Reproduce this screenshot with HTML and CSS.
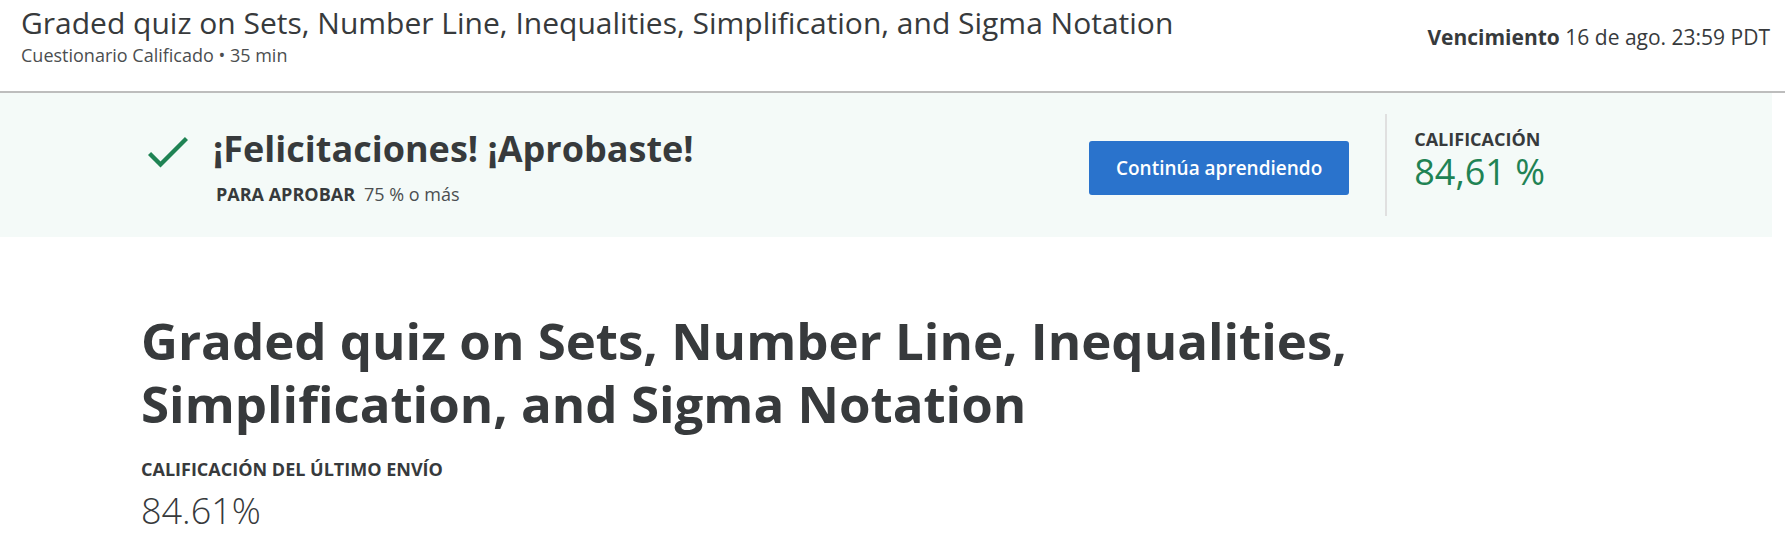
FILE: index.html
```html
<!DOCTYPE html>
<html lang="es">
<head>
<meta charset="utf-8">
<meta name="viewport" content="width=device-width, initial-scale=1">
<title>Graded quiz on Sets, Number Line, Inequalities, Simplification, and Sigma Notation</title>
<link rel="stylesheet" href="styles.css">
</head>
<body>
<header class="quiz-header">
  <div class="quiz-info">
    <h2 class="quiz-name">Graded quiz on Sets, Number Line, Inequalities, Simplification, and Sigma Notation</h2>
    <p class="quiz-kind">Cuestionario Calificado • 35 min</p>
  </div>
  <p class="quiz-due"><strong>Vencimiento</strong> 16 de ago. 23:59 PDT</p>
</header>
<section class="banner">
  <svg class="check" viewBox="0 0 40 32" aria-hidden="true"><path d="M1.5 17.5 12.5 28.5 38.5 2.5" fill="none" stroke="#1f8354" stroke-width="4.4"/></svg>
  <div class="result">
    <h2 class="result-title">¡Felicitaciones! ¡Aprobaste!</h2>
    <p class="result-rule"><strong class="label">PARA APROBAR</strong><span class="rule-value">75 % o más</span></p>
  </div>
  <button class="continue" type="button">Continúa aprendiendo</button>
  <div class="grade">
    <div class="label">CALIFICACIÓN</div>
    <div class="grade-value">84,61 %</div>
  </div>
</section>
<main class="content">
  <h1 class="content-title">Graded quiz on Sets, Number Line, Inequalities, Simplification, and Sigma Notation</h1>
  <div class="label">CALIFICACIÓN DEL ÚLTIMO ENVÍO</div>
  <div class="latest-value">84.61%</div>
</main>
</body>
</html>
```
FILE: styles.css
```css
* {
  box-sizing: border-box;
}

body {
  margin: 0;
  background: #fff;
  color: #373a3c;
  font-family: "Open Sans", "Noto Sans", sans-serif;
  font-size: 18px;
  line-height: 26px;
}

h1, h2, p {
  margin: 0;
}

.quiz-header {
  display: flex;
  justify-content: space-between;
  align-items: flex-start;
  padding: 4px 15px 23px 21px;
  border-bottom: 2px solid #bdbdbd;
}

.quiz-name {
  font-size: 30px;
  font-weight: 400;
  line-height: 38px;
}

.quiz-kind,
.rule-value {
  color: #4b4e50;
}

.quiz-due {
  padding-top: 18px;
  font-size: 21px;
  line-height: 30px;
  white-space: nowrap;
}

.quiz-due strong {
  font-weight: 700;
}

.banner {
  display: flex;
  align-items: flex-start;
  margin-right: 13px;
  padding: 21px 227px 21px 148px;
  background: #f4faf8;
}

.check {
  flex: none;
  width: 40px;
  height: 32px;
  margin-top: 22px;
}

.result {
  margin-left: 25px;
}

.result-title {
  padding-top: 10px;
  font-size: 36px;
  font-weight: 700;
  line-height: 50px;
}

.result-rule {
  display: flex;
  gap: 9px;
  padding: 7px 0 0 3px;
}

.label {
  font-size: 18px;
  font-weight: 700;
}

.continue {
  height: 54px;
  margin: 27px 36px 0 auto;
  padding: 0 27px;
  border: 0;
  border-radius: 3px;
  background: #2a73cc;
  color: #fff;
  font: 600 19px "Open Sans", "Noto Sans", sans-serif;
}

.grade {
  height: 102px;
  padding: 12px 0 0 27px;
  border-left: 2px solid #e0e0e0;
}

.grade-value {
  color: #1f8354;
  font-size: 36px;
  font-weight: 400;
  line-height: 40px;
}

.content {
  max-width: 1430px;
  padding: 72px 24px 32px 141px;
}

.content-title {
  font-size: 51px;
  font-weight: 700;
  line-height: 63px;
}

.content .label {
  margin-top: 21px;
}

.latest-value {
  margin-top: 5px;
  font-size: 36px;
  font-weight: 300;
  line-height: 48px;
}
```
